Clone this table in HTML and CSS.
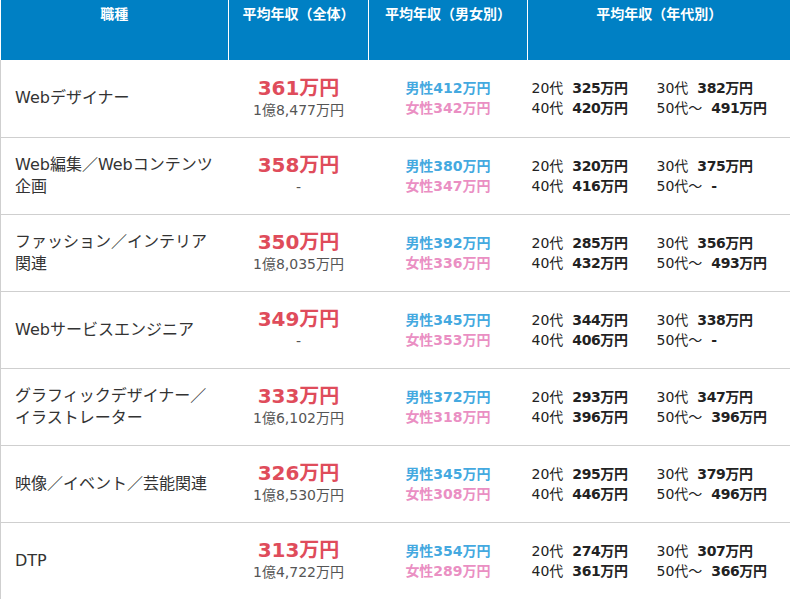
FILE: index.html
```html
<!DOCTYPE html>
<html lang="ja">
<head>
<meta charset="utf-8">
<title>平均年収</title>
<link rel="stylesheet" href="styles.css">
</head>
<body>
<table class="salary">
  <colgroup>
    <col class="c-name"><col class="c-total"><col class="c-gender"><col class="c-age">
  </colgroup>
  <thead>
    <tr>
      <th>職種</th>
      <th>平均年収（全体）</th>
      <th>平均年収（男女別）</th>
      <th>平均年収（年代別）</th>
    </tr>
  </thead>
  <tbody>
    <tr>
      <td class="name">Webデザイナー</td>
      <td class="total"><div class="main">361万円</div><div class="sub">1億8,477万円</div></td>
      <td class="gender"><div class="male">男性412万円</div><div class="female">女性342万円</div></td>
      <td class="age"><div class="ages">
        <div><span class="lab">20代</span><b>325万円</b></div><div><span class="lab">30代</span><b>382万円</b></div>
        <div><span class="lab">40代</span><b>420万円</b></div><div><span class="lab">50代～</span><b>491万円</b></div>
      </div></td>
    </tr>
    <tr>
      <td class="name">Web編集／Webコンテンツ<br>企画</td>
      <td class="total"><div class="main">358万円</div><div class="sub">-</div></td>
      <td class="gender"><div class="male">男性380万円</div><div class="female">女性347万円</div></td>
      <td class="age"><div class="ages">
        <div><span class="lab">20代</span><b>320万円</b></div><div><span class="lab">30代</span><b>375万円</b></div>
        <div><span class="lab">40代</span><b>416万円</b></div><div><span class="lab">50代～</span><b>-</b></div>
      </div></td>
    </tr>
    <tr>
      <td class="name">ファッション／インテリア<br>関連</td>
      <td class="total"><div class="main">350万円</div><div class="sub">1億8,035万円</div></td>
      <td class="gender"><div class="male">男性392万円</div><div class="female">女性336万円</div></td>
      <td class="age"><div class="ages">
        <div><span class="lab">20代</span><b>285万円</b></div><div><span class="lab">30代</span><b>356万円</b></div>
        <div><span class="lab">40代</span><b>432万円</b></div><div><span class="lab">50代～</span><b>493万円</b></div>
      </div></td>
    </tr>
    <tr>
      <td class="name">Webサービスエンジニア</td>
      <td class="total"><div class="main">349万円</div><div class="sub">-</div></td>
      <td class="gender"><div class="male">男性345万円</div><div class="female">女性353万円</div></td>
      <td class="age"><div class="ages">
        <div><span class="lab">20代</span><b>344万円</b></div><div><span class="lab">30代</span><b>338万円</b></div>
        <div><span class="lab">40代</span><b>406万円</b></div><div><span class="lab">50代～</span><b>-</b></div>
      </div></td>
    </tr>
    <tr>
      <td class="name">グラフィックデザイナー／<br>イラストレーター</td>
      <td class="total"><div class="main">333万円</div><div class="sub">1億6,102万円</div></td>
      <td class="gender"><div class="male">男性372万円</div><div class="female">女性318万円</div></td>
      <td class="age"><div class="ages">
        <div><span class="lab">20代</span><b>293万円</b></div><div><span class="lab">30代</span><b>347万円</b></div>
        <div><span class="lab">40代</span><b>396万円</b></div><div><span class="lab">50代～</span><b>396万円</b></div>
      </div></td>
    </tr>
    <tr>
      <td class="name">映像／イベント／芸能関連</td>
      <td class="total"><div class="main">326万円</div><div class="sub">1億8,530万円</div></td>
      <td class="gender"><div class="male">男性345万円</div><div class="female">女性308万円</div></td>
      <td class="age"><div class="ages">
        <div><span class="lab">20代</span><b>295万円</b></div><div><span class="lab">30代</span><b>379万円</b></div>
        <div><span class="lab">40代</span><b>446万円</b></div><div><span class="lab">50代～</span><b>496万円</b></div>
      </div></td>
    </tr>
    <tr>
      <td class="name">DTP</td>
      <td class="total"><div class="main">313万円</div><div class="sub">1億4,722万円</div></td>
      <td class="gender"><div class="male">男性354万円</div><div class="female">女性289万円</div></td>
      <td class="age"><div class="ages">
        <div><span class="lab">20代</span><b>274万円</b></div><div><span class="lab">30代</span><b>307万円</b></div>
        <div><span class="lab">40代</span><b>361万円</b></div><div><span class="lab">50代～</span><b>366万円</b></div>
      </div></td>
    </tr>
  </tbody>
</table>
</body>
</html>
```
FILE: styles.css
```css
html, body {
  margin: 0;
  padding: 0;
  background: #fff;
}
body {
  font-family: "DejaVu Sans", "Noto Sans CJK JP", sans-serif;
  color: #333;
  overflow: hidden;
}
.salary {
  border-collapse: collapse;
  table-layout: fixed;
  width: 790px;
}
.c-name { width: 228px; }
.c-total { width: 140px; }
.c-gender { width: 159px; }
.c-age { width: 263px; }

.salary th {
  background: #0080c4;
  color: #fff;
  font-size: 14px;
  font-weight: bold;
  line-height: 20px;
  height: 60px;
  box-sizing: border-box;
  padding: 4px 0 0;
  vertical-align: top;
  text-align: center;
  border-left: 1px solid #fff;
}
.salary th:first-child { border-left: none; }

.salary td {
  height: 77px;
  box-sizing: border-box;
  padding: 0;
  vertical-align: middle;
  border-bottom: 1px solid #cfcfcf;
}
.salary td.name {
  border-left: 1px solid #cfcfcf;
  padding-left: 14px;
  font-size: 16px;
  line-height: 22px;
  color: #333;
}
.total { text-align: center; }
.main {
  font-size: 20px;
  font-weight: bold;
  line-height: 22px;
  color: #df4c5b;
  padding-bottom: 1px;
}
.sub {
  font-size: 14px;
  line-height: 20px;
  color: #555;
}
.gender {
  text-align: center;
  font-size: 14px;
  font-weight: bold;
  line-height: 20px;
}
.male { color: #44a9e0; }
.female { color: #ea8fc3; }

.ages {
  display: grid;
  grid-template-columns: 125px 125px;
  padding-left: 4px;
  font-size: 14px;
  line-height: 20px;
  color: #222;
}
.lab { margin-right: 9px; }
.ages b { font-weight: bold; color: #222; letter-spacing: -0.4px; }
```
